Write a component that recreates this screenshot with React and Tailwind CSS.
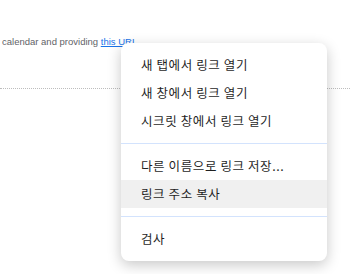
import React from 'react';

const groups = [
    ['새 탭에서 링크 열기', '새 창에서 링크 열기', '시크릿 창에서 링크 열기'],
    ['다른 이름으로 링크 저장...', '링크 주소 복사'],
    ['검사'],
];

const App = () => {
    return (
        <div className="relative w-[350px] h-[274px] bg-white overflow-hidden">
            <div className="pt-[36px] pl-[2px] whitespace-nowrap text-[9.5px] leading-[12px] text-[#5f6368] font-['Liberation_Sans',sans-serif]">
                calendar and providing <span className="text-[#1a73e8] underline">this URL</span>
            </div>
            <div className="mt-[40px] h-0 border-t border-dotted border-[#bdbdbd]" />

            {/* context menu */}
            <div className="absolute left-[121px] top-[43px] w-[206px] bg-white rounded-[8px] py-2 shadow-[0_4px_14px_rgba(0,0,0,0.22)] font-['Noto_Sans_CJK_KR',sans-serif] text-[12.5px] tracking-[0.6px] text-[#1f1f1f]">
                {groups.map((items, gi) => (
                    <div key={gi}>
                        {gi > 0 && <div className="my-2 h-px bg-[#d3e3fd]" />}
                        {items.map((label) => (
                            <div
                                key={label}
                                className={`h-[28px] flex items-center pl-[20px] ${label === '링크 주소 복사' ? 'bg-[#f0f0f0]' : ''}`}
                            >
                                {label}
                            </div>
                        ))}
                    </div>
                ))}
            </div>
        </div>
    );
};

export default App;
